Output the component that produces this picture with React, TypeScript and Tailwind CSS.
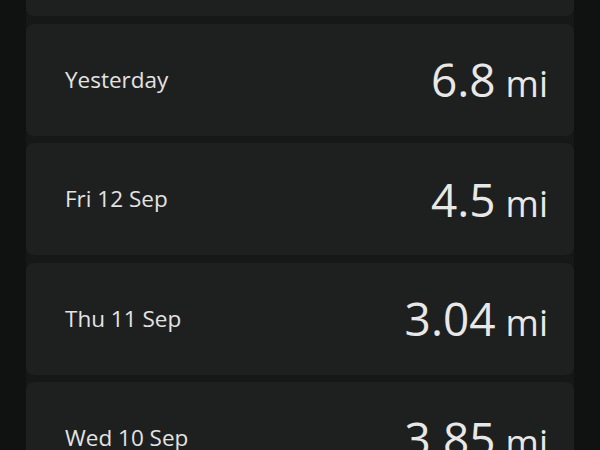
const days = [
  { label: 'Yesterday', value: '6.8' },
  { label: 'Fri 12 Sep', value: '4.5' },
  { label: 'Thu 11 Sep', value: '3.04' },
  { label: 'Wed 10 Sep', value: '3.85' },
]

export default function App() {
  return (
    <div className="h-[450px] w-[600px] overflow-hidden bg-[#101211] flex justify-center" style={{ fontFamily: '"Open Sans", sans-serif' }}>
      <div className="w-[548px] bg-[#161817] flex flex-col gap-[7.5px] mt-[-96px] shrink-0">
        {/* row scrolled above the top edge */}
        <div className="h-[112px] shrink-0 rounded-lg bg-[#1e1f1f]" />
        {days.map(d => (
          <div key={d.label} className="h-[112px] shrink-0 rounded-lg bg-[#1e1f1f] flex items-center justify-between pl-[39px] pr-[26px]">
            <span className="text-[22.5px] font-medium text-[#e3e3e3]">{d.label}</span>
            <span className="text-[#e8e8e8]">
              <span className="text-[46px]">{d.value}</span>
              <span className="text-[36px] ml-[10px]">mi</span>
            </span>
          </div>
        ))}
      </div>
    </div>
  )
}
